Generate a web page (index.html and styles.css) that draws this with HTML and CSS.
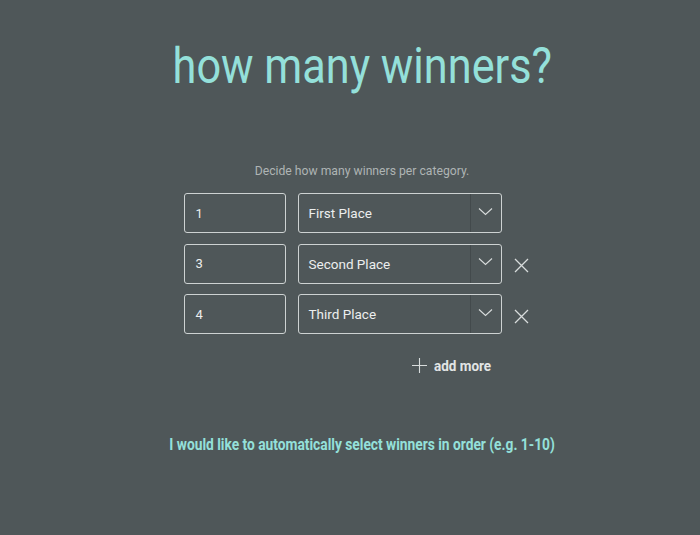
FILE: index.html
```html
<!DOCTYPE html>
<html lang="en">
<head>
    <meta charset="UTF-8">
    <meta name="viewport" content="width=device-width, initial-scale=1.0">
    <title>How many winners</title>
    <link rel="stylesheet" href="styles.css">
</head>
<body>
    <div class="page">
        <h1 class="title">how many winners?</h1>

        <p class="hint">Decide how many winners per category.</p>

        <div class="winners">
            <div class="winner-row">
                <div class="count">1</div>
                <div class="place">
                    <span class="place-name">First Place</span>
                    <span class="place-arrow">
                        <svg width="15" height="9" viewBox="0 0 15 9"><path d="M1 1.5 L7.5 7.5 L14 1.5" fill="none" stroke="#d8dcdc" stroke-width="1.1"/></svg>
                    </span>
                </div>
                <span class="remove"></span>
            </div>
            <div class="winner-row">
                <div class="count">3</div>
                <div class="place">
                    <span class="place-name">Second Place</span>
                    <span class="place-arrow">
                        <svg width="15" height="9" viewBox="0 0 15 9"><path d="M1 1.5 L7.5 7.5 L14 1.5" fill="none" stroke="#d8dcdc" stroke-width="1.1"/></svg>
                    </span>
                </div>
                <span class="remove">
                    <svg width="15" height="15" viewBox="0 0 15 15"><path d="M1 1 L14 14 M14 1 L1 14" stroke="#d8dcdc" stroke-width="1.3"/></svg>
                </span>
            </div>
            <div class="winner-row">
                <div class="count">4</div>
                <div class="place">
                    <span class="place-name">Third Place</span>
                    <span class="place-arrow">
                        <svg width="15" height="9" viewBox="0 0 15 9"><path d="M1 1.5 L7.5 7.5 L14 1.5" fill="none" stroke="#d8dcdc" stroke-width="1.1"/></svg>
                    </span>
                </div>
                <span class="remove">
                    <svg width="15" height="15" viewBox="0 0 15 15"><path d="M1 1 L14 14 M14 1 L1 14" stroke="#d8dcdc" stroke-width="1.3"/></svg>
                </span>
            </div>

            <div class="add-more">
                <svg width="15" height="15" viewBox="0 0 15 15"><path d="M7.5 0 V15 M0 7.5 H15" stroke="#d8dcdc" stroke-width="1.1"/></svg>
                <span class="add-label">add more</span>
            </div>
        </div>

        <p class="auto-select">I would like to automatically select winners in order (e.g. 1-10)</p>
    </div>
</body>
</html>
```

FILE: styles.css
```css
body {
    margin: 0;
    background-color: #4f5759;
    font-family: Roboto, 'Liberation Sans', sans-serif;
    color: #eceeee;
}

.page {
    padding: 0 0 0 24px;
    display: flex;
    flex-direction: column;
    align-items: center;
}

/* Roboto only ships the regular width here, so squeeze it a little */
.title {
    margin: 34px 0 0 0;
    font-size: 50px;
    font-weight: 400;
    line-height: 64px;
    color: #94e0da;
    transform: scaleX(0.865);
}

.hint {
    margin: 65px 0 0 0;
    font-size: 12.2px;
    line-height: 16px;
    color: #aeb4b4;
}

.winners {
    margin-top: 14px;
    margin-left: -12px;
    display: flex;
    flex-direction: column;
    gap: 10.5px;
}

.winner-row {
    display: flex;
    align-items: center;
    gap: 12px;
}

.count {
    box-sizing: border-box;
    width: 102px;
    height: 40px;
    border: 1.5px solid #cdd2d2;
    border-radius: 3px;
    padding: 0 11px;
    display: flex;
    align-items: center;
    font-size: 13px;
}

.place {
    box-sizing: border-box;
    width: 204px;
    height: 40px;
    border: 1.5px solid #cdd2d2;
    border-radius: 3px;
    display: flex;
    align-items: stretch;
}

.place-name {
    flex: 1;
    display: flex;
    align-items: center;
    padding-left: 10px;
    font-size: 13.5px;
}

.place-arrow {
    width: 30px;
    border-left: 1px solid #434a4c;
    display: flex;
    align-items: center;
    justify-content: center;
    padding-bottom: 4px;
}

.remove {
    width: 15px;
    height: 15px;
    margin-top: 4px;
    display: flex;
}

.add-more {
    margin-top: 12px;
    align-self: flex-end;
    margin-right: 29px;
    display: flex;
    align-items: center;
    gap: 7px;
    font-size: 15.5px;
    font-weight: 700;
    color: #e2e5e5;
}

.add-label {
    display: inline-block;
    transform: scaleX(0.87);
    transform-origin: left center;
}

.auto-select {
    margin: 60px 0 0 0;
    font-size: 16px;
    font-weight: 700;
    color: #94e0da;
    transform: scaleX(0.86);
}
```
